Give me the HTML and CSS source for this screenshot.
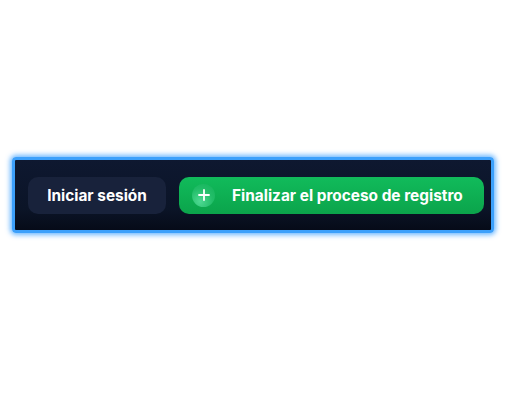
FILE: index.html
```html
<!DOCTYPE html>
<html lang="es">
<head>
<meta charset="utf-8">
<link rel="stylesheet" href="styles.css">
</head>
<body>
<div class="stage">
  <div class="bar">
    <button class="btn btn-login">Iniciar sesión</button>
    <button class="btn btn-finish">
      <span class="plus">
        <svg width="12" height="12" viewBox="0 0 12 12"><path d="M6 1v10M1 6h10" stroke="#fff" stroke-width="1.8" stroke-linecap="round"/></svg>
      </span>
      <span class="label">Finalizar el proceso de registro</span>
    </button>
  </div>
</div>
</body>
</html>
```
FILE: styles.css
```css
html, body {
  margin: 0;
  padding: 0;
  background: #ffffff;
}
.stage {
  width: 506px;
  height: 393px;
  padding: 157px 0 0 12px;
  box-sizing: border-box;
}
.bar {
  width: 482px;
  height: 76px;
  box-sizing: border-box;
  border: 3px solid #3ca0fb;
  border-radius: 4px;
  box-shadow: 0 0 5px 2px rgba(60, 160, 255, 0.75);
  background: linear-gradient(180deg, #0e1830 0%, #0b1427 70%, #060b18 100%);
  display: flex;
  align-items: center;
  gap: 13px;
  padding: 0 7px 0 13px;
}
.btn {
  border: none;
  height: 37px;
  border-radius: 10px;
  font-family: Inter, "Liberation Sans", sans-serif;
  font-weight: 700;
  font-size: 15.4px;
  color: #ffffff;
  display: flex;
  align-items: center;
  padding: 0;
  cursor: pointer;
}
.btn-login {
  width: 138px;
  justify-content: center;
  background: #18223b;
}
.btn-finish {
  flex: 1;
  background: linear-gradient(180deg, #11bb5b 0%, #0ba44b 100%);
  padding-left: 13px;
  gap: 17px;
}
.plus {
  width: 23px;
  height: 23px;
  border-radius: 50%;
  background: radial-gradient(circle at 35% 75%, #4fd993 0%, #22bd68 55%, #13b259 100%);
  display: flex;
  align-items: center;
  justify-content: center;
}
.plus svg {
  display: block;
}
```
